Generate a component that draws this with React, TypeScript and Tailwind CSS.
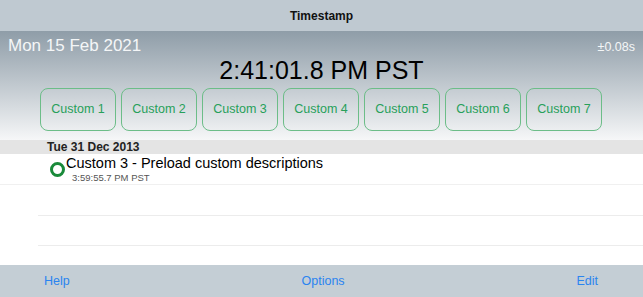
import React from "react";

const buttons = ["Custom 1", "Custom 2", "Custom 3", "Custom 4", "Custom 5", "Custom 6", "Custom 7"];

export default function App() {
  return (
    <div className="w-[643px] h-[297px] flex flex-col overflow-hidden bg-white" style={{ fontFamily: '"Liberation Sans", Arial, sans-serif' }}>
      <div className="h-[31px] shrink-0 bg-[#bfc9d1] flex items-center justify-center">
        <span className="text-[12px] font-bold text-[#111]">Timestamp</span>
      </div>
      <div className="h-[109px] shrink-0 bg-gradient-to-b from-[#8f9da8] to-[#f6f7f8] flex flex-col">
        <div className="flex items-start justify-between pl-[8px] pr-[8px] pt-[5px] h-[22px]">
          <span className="text-[17px] leading-[20px] text-[#f4f6f7]">Mon 15 Feb 2021</span>
          <span className="text-[12.5px] leading-[20px] mt-[1px] text-[#f4f6f7]">±0.08s</span>
        </div>
        <div className="flex justify-center h-[35px]">
          <span className="text-[25px] leading-[34px] text-black">2:41:01.8 PM PST</span>
        </div>
        <div className="flex gap-[5px] pl-[40px]">
          {buttons.map((b) => (
            <div key={b} className="w-[76px] h-[43px] rounded-[8px] border border-[#6cbd88] flex items-center justify-center text-[12.5px] text-[#27a05a]">
              {b}
            </div>
          ))}
        </div>
      </div>
      <div className="h-[14px] shrink-0 bg-[#e4e4e4] flex items-center pl-[47px]">
        <span className="text-[12px] leading-[14px] font-bold text-[#222]">Tue 31 Dec 2013</span>
      </div>
      <div className="flex-1 flex flex-col">
        <div className="h-[31px] flex pl-[50px] border-b border-[#f0f0f0]">
          <div className="w-[15px] h-[15px] mt-[8px] rounded-full border-[3px] border-[#1a8a3a] shrink-0"></div>
          <div className="flex flex-col pl-[1px]">
            <span className="text-[14.5px] leading-[18px] text-black">Custom 3 - Preload custom descriptions</span>
            <span className="text-[9.5px] leading-[12px] ml-[6px] text-[#555]">3:59:55.7 PM PST</span>
          </div>
        </div>
        <div className="ml-[38px] h-[31px] border-b border-[#ececec]"></div>
        <div className="ml-[38px] h-[30px] border-b border-[#ececec]"></div>
      </div>
      <div className="h-[32px] shrink-0 bg-[#c4ced5] flex items-center justify-between pl-[44px] pr-[45px] text-[12.5px] text-[#2a84f0]">
        <span>Help</span>
        <span>Options</span>
        <span>Edit</span>
      </div>
    </div>
  );
}
